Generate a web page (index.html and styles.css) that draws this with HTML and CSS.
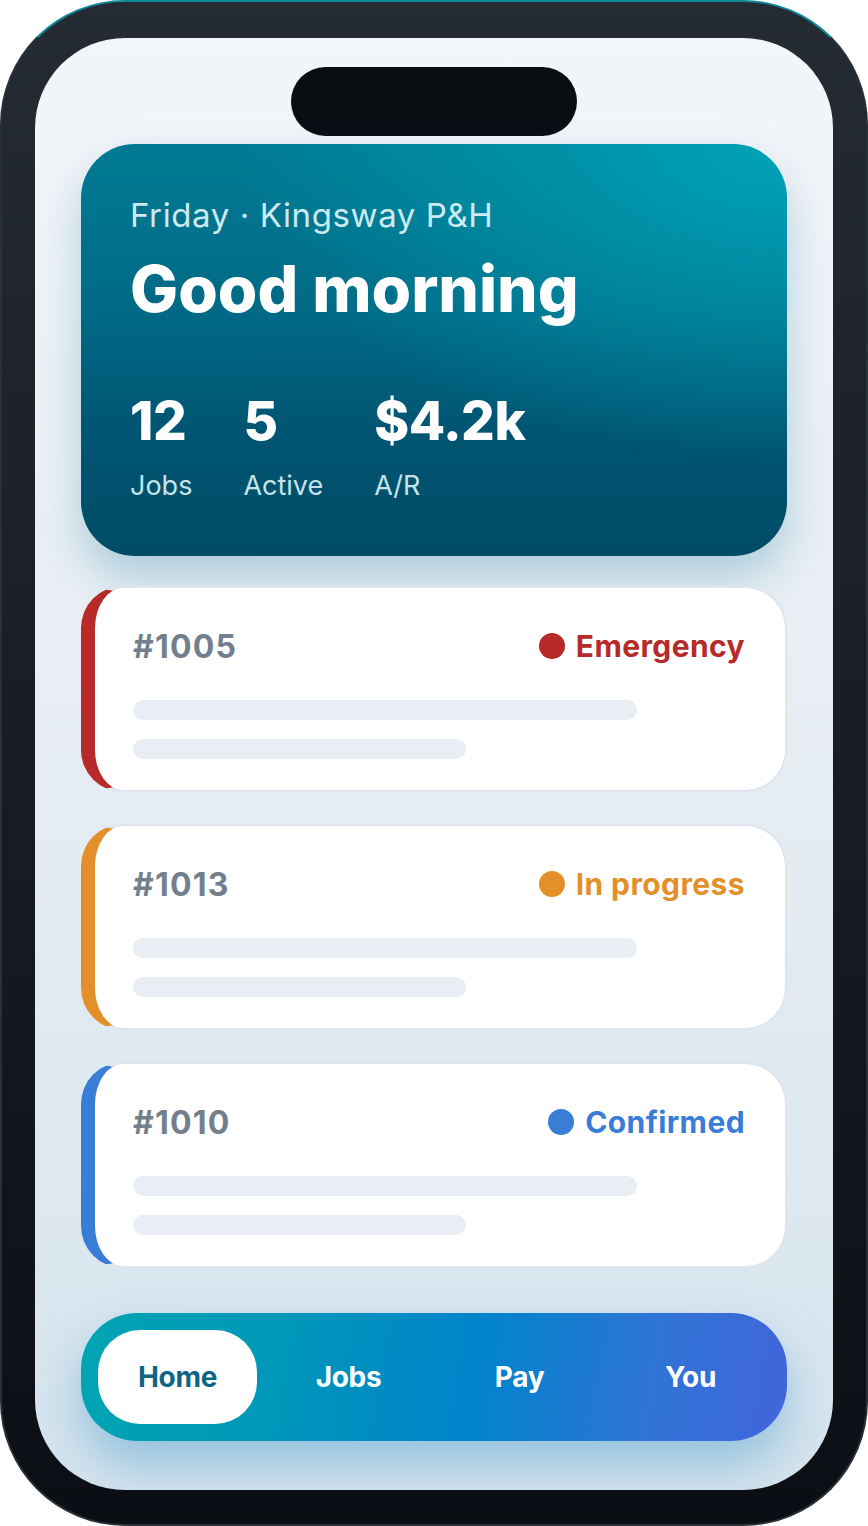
FILE: index.html
```html
<!DOCTYPE html>
<html lang="en">
<head>
  <meta charset="UTF-8" />
  <meta name="viewport" content="width=device-width, initial-scale=1.0"/>
  <title>Kingsway P&amp;H</title>
  <link rel="stylesheet" href="styles.css">
</head>
<body>
  <div class="phone">
    <div class="screen">
      <div class="island"></div>

      <section class="hero">
        <div class="hero-sub">Friday · Kingsway P&amp;H</div>
        <h1 class="hero-title">Good morning</h1>
        <div class="stats">
          <div class="stat">
            <div class="stat-num">12</div>
            <div class="stat-label">Jobs</div>
          </div>
          <div class="stat">
            <div class="stat-num">5</div>
            <div class="stat-label">Active</div>
          </div>
          <div class="stat">
            <div class="stat-num">$4.2k</div>
            <div class="stat-label">A/R</div>
          </div>
        </div>
      </section>

      <div class="jobs">
        <div class="job emergency">
          <div class="job-head">
            <span class="job-id">#1005</span>
            <span class="status"><i class="dot"></i>Emergency</span>
          </div>
          <div class="bar long"></div>
          <div class="bar short"></div>
        </div>
        <div class="job progress">
          <div class="job-head">
            <span class="job-id">#1013</span>
            <span class="status"><i class="dot"></i>In progress</span>
          </div>
          <div class="bar long"></div>
          <div class="bar short"></div>
        </div>
        <div class="job confirmed">
          <div class="job-head">
            <span class="job-id">#1010</span>
            <span class="status"><i class="dot"></i>Confirmed</span>
          </div>
          <div class="bar long"></div>
          <div class="bar short"></div>
        </div>
      </div>

      <nav class="tabs">
        <div class="tab active">Home</div>
        <div class="tab">Jobs</div>
        <div class="tab">Pay</div>
        <div class="tab">You</div>
      </nav>
    </div>
  </div>
</body>
</html>
```

FILE: styles.css
```css
* {
  box-sizing: border-box;
}

body {
  margin: 0;
  background: #ffffff;
  font-family: Inter, "Noto Sans", sans-serif;
}

.phone {
  width: 868px;
  height: 1526px;
  padding: 36px 33px;
  border: 2px solid #2a3038;
  border-top-color: #0e8798;
  border-radius: 125px;
  background: linear-gradient(180deg, #252b33 0%, #181d24 50%, #0b0f14 100%);
}

.screen {
  height: 1452px;
  padding: 29px 46px 0;
  border-radius: 90px;
  background: linear-gradient(180deg, #f3f6f9 0%, #e6edf2 50%, #d6e4ee 100%);
  overflow: hidden;
}

.island {
  width: 286px;
  height: 69px;
  margin: 0 auto;
  border-radius: 35px;
  background: #0a0d12;
}

.hero {
  margin-top: 8px;
  height: 412px;
  padding: 51px 49px 0;
  border-radius: 54px;
  color: #ffffff;
  background:
    radial-gradient(ellipse at 100% 0%, #00a2b6 0%, rgba(0, 150, 175, 0) 55%),
    linear-gradient(180deg, #007b93 0%, #006a86 40%, #005572 70%, #004c67 100%);
  box-shadow: 0 22px 44px rgba(60, 140, 175, 0.35);
}

.hero-sub {
  font-size: 33px;
  line-height: 40px;
  color: #cdeaf0;
  letter-spacing: 0.6px;
}

.hero-title {
  margin: 19px 0 0;
  font-size: 64px;
  line-height: 70px;
  font-weight: 800;
  letter-spacing: 0;
}

.stats {
  display: flex;
  gap: 51px;
  margin-top: 71px;
}

.stat-num {
  font-size: 53px;
  line-height: 52px;
  font-weight: 800;
  letter-spacing: -0.5px;
}

.stat-label {
  margin-top: 22px;
  font-size: 27px;
  line-height: 34px;
  color: #c6e3ea;
}

.jobs {
  display: flex;
  flex-direction: column;
  gap: 32px;
  margin-top: 30px;
}

.job {
  height: 206px;
  padding: 39px 40px 0 38px;
  background: #ffffff;
  border: 2px solid #dfe5ec;
  border-left: 14px solid;
  border-radius: 42px;
}

.job.emergency { border-left-color: #b62a29; }
.job.progress { border-left-color: #e3902a; }
.job.confirmed { border-left-color: #3a7dd6; }

.job-head {
  display: flex;
  justify-content: space-between;
  align-items: center;
  height: 38px;
}

.job-id {
  font-size: 32px;
  font-weight: 700;
  color: #737f8d;
  letter-spacing: 1.2px;
}

.status {
  display: flex;
  align-items: center;
  gap: 11px;
  font-size: 30px;
  font-weight: 700;
  letter-spacing: 0.4px;
}

.dot {
  width: 26px;
  height: 26px;
  border-radius: 50%;
  background: currentColor;
}

.emergency .status { color: #b62a29; }
.progress .status { color: #e3902a; }
.confirmed .status { color: #3a7dd6; }

.bar {
  height: 20px;
  border-radius: 10px;
  background: #e9eef4;
}

.bar.long {
  width: 504px;
  margin-top: 35px;
}

.bar.short {
  width: 333px;
  margin-top: 19px;
}

.tabs {
  display: flex;
  gap: 12px;
  margin-top: 45px;
  height: 128px;
  padding: 17px;
  border-radius: 56px;
  background: linear-gradient(100deg, #00a5b1 0%, #0096ba 30%, #0084cb 55%, #2f74d6 80%, #4365db 100%);
  box-shadow: 0 24px 48px rgba(80, 160, 205, 0.5);
}

.tab {
  flex: 1;
  display: flex;
  align-items: center;
  justify-content: center;
  border-radius: 42px;
  font-size: 28px;
  font-weight: 700;
  color: #ffffff;
  letter-spacing: -0.3px;
}

.tab.active {
  background: #ffffff;
  color: #0d6584;
}
```
